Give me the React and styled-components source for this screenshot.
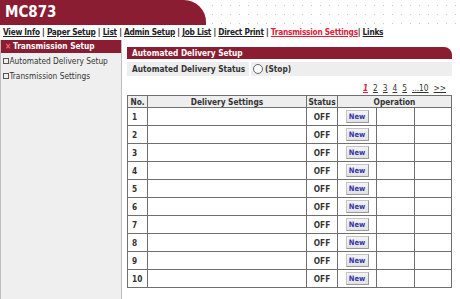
import styled, { createGlobalStyle } from "styled-components";

const GlobalStyle = createGlobalStyle`
  body {
    margin: 0;
    background: #fff;
    font-family: "DejaVu Sans Condensed", "DejaVu Sans", sans-serif;
    font-size: 8.25px;
    color: #333;
  }
`;

const RED = "#8a1d32";

const navItems = [
  "View Info",
  "Paper Setup",
  "List",
  "Admin Setup",
  "Job List",
  "Direct Print",
];

const pages = ["1", "2", "3", "4", "5", "...10", ">>"];

const rows = [1, 2, 3, 4, 5, 6, 7, 8, 9, 10];

export default function App() {
  return (
    <>
      <GlobalStyle />
      <Page>
        <Header>
          <TitleBar>MC873</TitleBar>
          <Dots />
        </Header>
        <Nav>
          {navItems.map((n) => (
            <span key={n}>
              <NavLink>{n}</NavLink>
              <Sep> | </Sep>
            </span>
          ))}
          <NavLink $active>Transmission Settings</NavLink>
          <Sep>| </Sep>
          <NavLink>Links</NavLink>
        </Nav>
        <Body>
          <Sidebar>
            <SideHead>
              <Mark>×</Mark>Transmission Setup
            </SideHead>
            <SideItem>
              <Box />Automated Delivery Setup
            </SideItem>
            <SideItem>
              <Box />Transmission Settings
            </SideItem>
          </Sidebar>
          <Main>
            <PanelHead>Automated Delivery Setup</PanelHead>
            <StatusRow>
              <StatusLabel>Automated Delivery Status</StatusLabel>
              <StatusValue>
                <Radio />
                (Stop)
              </StatusValue>
            </StatusRow>
            <Pager>
              {pages.map((p, i) => (
                <PageLink key={p} $current={i === 0}>
                  {p}
                </PageLink>
              ))}
            </Pager>
            <Table>
              <colgroup>
                <col style={{ width: 20 }} />
                <col style={{ width: 159 }} />
                <col style={{ width: 31 }} />
                <col style={{ width: 39 }} />
                <col style={{ width: 38 }} />
                <col />
              </colgroup>
              <thead>
                <tr>
                  <Th>No.</Th>
                  <Th>Delivery Settings</Th>
                  <Th>Status</Th>
                  <Th colSpan={3}>Operation</Th>
                </tr>
              </thead>
              <tbody>
                {rows.map((r) => (
                  <tr key={r}>
                    <NumCell>{r}</NumCell>
                    <Td />
                    <StateCell>OFF</StateCell>
                    <BtnCell>
                      <NewBtn>New</NewBtn>
                    </BtnCell>
                    <Td />
                    <Td />
                  </tr>
                ))}
              </tbody>
            </Table>
          </Main>
        </Body>
      </Page>
    </>
  );
}

const Page = styled.div`
  width: 460px;
  height: 299px;
  overflow: hidden;
`;

const Header = styled.div`
  display: flex;
  height: 25px;
`;

const TitleBar = styled.div`
  width: 201px;
  background: ${RED};
  border-top-right-radius: 22px;
  color: #fff;
  font-weight: bold;
  font-size: 15px;
  line-height: 25px;
  padding-left: 5px;
`;

const Dots = styled.div`
  flex: 1;
  background-image: radial-gradient(circle, #c8c8c8 0.8px, transparent 1px);
  background-size: 9px 9px;
  background-position: 2px 1px;
`;

const Nav = styled.div`
  height: 15px;
  line-height: 15px;
  padding-left: 3px;
  white-space: nowrap;
  font-weight: bold;
  color: #222;
  letter-spacing: -0.25px;
`;

const NavLink = styled.span`
  text-decoration: underline;
  color: ${(p) => (p.$active ? "#e0213a" : "#222")};
`;

const Sep = styled.span`
  white-space: pre;
`;

const Body = styled.div`
  display: flex;
  align-items: flex-start;
  gap: 5px;
`;

const Sidebar = styled.div`
  width: 120px;
  height: 259px;
  background: #efefef;
  border-left: 1px solid #bdbdbd;
  border-right: 1px solid #bdbdbd;
`;

const SideHead = styled.div`
  height: 13px;
  line-height: 13px;
  background: ${RED};
  color: #fff;
  font-weight: bold;
  padding-left: 4px;
  display: flex;
  align-items: center;
`;

const Mark = styled.span`
  color: #ff6b7a;
  font-size: 8px;
  width: 8px;
`;

const SideItem = styled.div`
  display: flex;
  align-items: center;
  height: 15px;
  padding-left: 2px;
  color: #333;
  &:first-of-type {
    margin-top: 2px;
  }
`;

const Box = styled.span`
  display: inline-block;
  width: 4px;
  height: 4px;
  border: 1px solid #555;
  margin-right: 0.5px;
`;

const Main = styled.div`
  width: 325px;
  padding-top: 7px;
`;

const PanelHead = styled.div`
  height: 12px;
  line-height: 12px;
  background: ${RED};
  border-top-right-radius: 8px;
  color: #fff;
  font-weight: bold;
  padding-left: 5px;
`;

const StatusRow = styled.div`
  display: flex;
  margin-top: 3px;
  height: 14px;
  background: #eee;
`;

const StatusLabel = styled.div`
  width: 117px;
  padding-left: 5px;
  line-height: 14px;
  font-weight: bold;
  border-right: 2px solid #fff;
`;

const StatusValue = styled.div`
  display: flex;
  align-items: center;
  gap: 2px;
  padding-left: 2px;
  font-weight: bold;
`;

const Radio = styled.span`
  display: inline-block;
  width: 8px;
  height: 8px;
  border-radius: 50%;
  border: 1px solid #666;
  background: #f8f8f8;
`;

const Pager = styled.div`
  display: flex;
  justify-content: flex-end;
  gap: 5px;
  height: 12px;
  line-height: 12px;
  margin-top: 6px;
  padding-right: 6px;
`;

const PageLink = styled.span`
  text-decoration: underline;
  color: ${(p) => (p.$current ? "#e0213a" : "#333")};
  font-style: ${(p) => (p.$current ? "italic" : "normal")};
  font-weight: ${(p) => (p.$current ? "bold" : "normal")};
`;

const Table = styled.table`
  margin-top: 1px;
  width: 325px;
  border-collapse: collapse;
  table-layout: fixed;
  border: 1px solid #666;
`;

const Th = styled.th`
  height: 11px;
  padding: 0;
  background: #eee;
  border: 1px solid #6f6f6f;
  font-weight: bold;
  text-align: center;
`;

const Td = styled.td`
  height: 17px;
  padding: 0;
  border: 1px solid #6f6f6f;
`;

const NumCell = styled(Td)`
  font-weight: bold;
  padding-left: 4px;
`;

const StateCell = styled(Td)`
  font-weight: bold;
  text-align: center;
`;

const BtnCell = styled(Td)`
  text-align: center;
`;

const NewBtn = styled.span`
  display: inline-block;
  width: 21px;
  height: 11px;
  line-height: 11px;
  background: linear-gradient(#f4f4f4, #e2e2e2);
  border: 1px solid #c4c4c4;
  border-right-color: #9a9a9a;
  border-bottom-color: #9a9a9a;
  color: #3535a8;
  font-weight: bold;
  font-size: 7.5px;
  text-align: center;
  vertical-align: middle;
`;
